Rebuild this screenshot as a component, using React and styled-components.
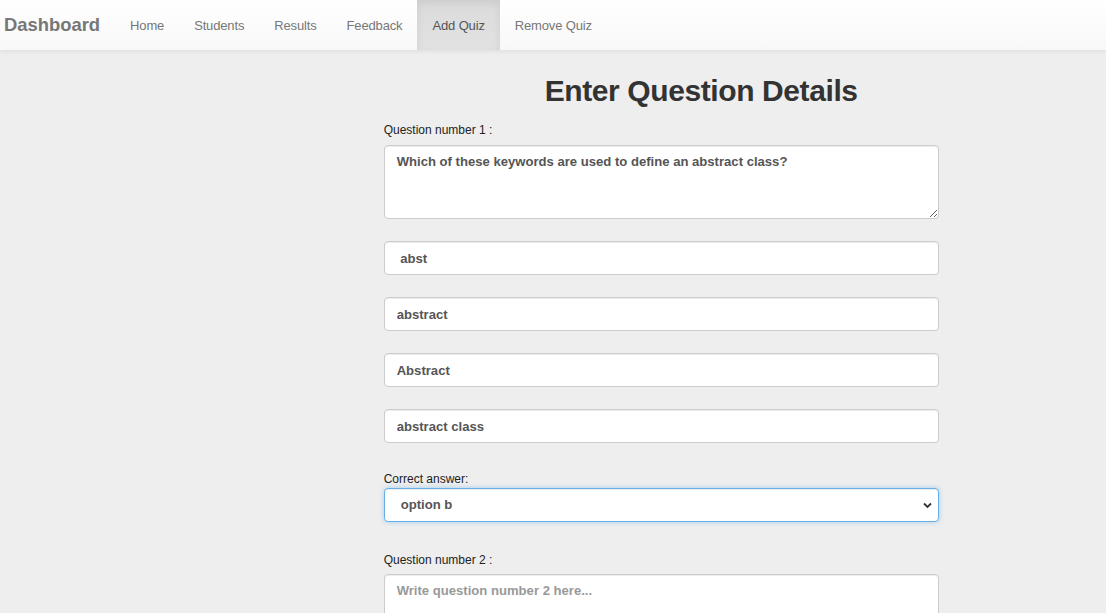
import React from "react";
import styled, { createGlobalStyle } from "styled-components";

const GlobalStyle = createGlobalStyle`
  html, body { margin: 0; padding: 0; }
  body {
    background: #eeeeee;
    font-family: "Liberation Sans", Arial, sans-serif;
    color: #333;
  }
  * { box-sizing: border-box; }
`;

const NavBar = styled.nav`
  height: 50px;
  display: flex;
  align-items: stretch;
  background: linear-gradient(to bottom, #ffffff 0%, #f8f8f8 100%);
  box-shadow: 0 1px 5px rgba(0, 0, 0, 0.08);
  position: relative;
  z-index: 1;
`;

const Brand = styled.a`
  display: flex;
  align-items: center;
  padding: 0 15px 0 4px;
  font-size: 18.4px;
  font-weight: 700;
  color: #777;
  text-decoration: none;
`;

const NavList = styled.ul`
  display: flex;
  list-style: none;
  margin: 0;
  padding: 0;
`;

const NavLink = styled.a`
  display: flex;
  align-items: center;
  height: 100%;
  padding: 0 15px;
  font-size: 13px;
  letter-spacing: -0.15px;
  color: ${(p) => (p.$active ? "#555" : "#777")};
  text-decoration: none;
  background: ${(p) =>
    p.$active ? "linear-gradient(to bottom, #dbdbdb 0%, #e2e2e2 100%)" : "transparent"};
  box-shadow: ${(p) => (p.$active ? "inset 0 3px 9px rgba(0,0,0,0.075)" : "none")};
`;

const Main = styled.main`
  padding-left: calc(33.3333% + 15px);
`;

const Form = styled.form`
  width: 555px;
  display: flex;
  flex-direction: column;
`;

const Title = styled.h1`
  margin: 24px 0 15px;
  padding-left: 80px;
  text-align: center;
  font-size: 30px;
  line-height: 33px;
  letter-spacing: -0.4px;
  font-weight: 700;
  color: #333;
`;

const Label = styled.label`
  display: block;
  font-size: 12px;
  line-height: 17px;
  color: #222;
  margin-top: ${(p) => p.$top || 0}px;
  margin-bottom: ${(p) => p.$bottom || 0}px;
`;

const fieldBase = `
  width: 100%;
  display: block;
  border: 1px solid #ccc;
  border-radius: 4px;
  background: #fff;
  font-family: "Liberation Sans", Arial, sans-serif;
  font-size: 13.1px;
  font-weight: 700;
  line-height: 20px;
  color: #555;
  padding: 6px 12px;
  box-shadow: inset 0 1px 1px rgba(0,0,0,0.075);
  outline: none;
  &::placeholder { color: #999; }
`;

const TextArea = styled.textarea`
  ${fieldBase}
  height: 74px;
  resize: vertical;
`;

const Input = styled.input`
  ${fieldBase}
  height: 34px;
  margin-top: 22px;
`;

const SelectWrap = styled.div`
  position: relative;
`;

const Select = styled.select`
  ${fieldBase}
  height: 34px;
  padding-left: 16px;
  appearance: none;
  -webkit-appearance: none;
  border-color: #66afe9;
  box-shadow: inset 0 1px 1px rgba(0,0,0,0.075), 0 0 5px rgba(102,175,233,0.55);
`;

const Chevron = styled.svg`
  position: absolute;
  right: 7px;
  top: 14px;
  width: 9px;
  height: 7px;
  pointer-events: none;
`;

const options = [" abst", "abstract", "Abstract", "abstract class"];

export default function App() {
  return (
    <>
      <GlobalStyle />
      <NavBar>
        <Brand href="#">Dashboard</Brand>
        <NavList>
          {["Home", "Students", "Results", "Feedback", "Add Quiz", "Remove Quiz"].map((t) => (
            <li key={t}>
              <NavLink href="#" $active={t === "Add Quiz"}>
                {t}
              </NavLink>
            </li>
          ))}
        </NavList>
      </NavBar>
      <Main>
        <Form onSubmit={(e) => e.preventDefault()}>
          <Title>Enter Question Details</Title>
          <Label $bottom={6}>Question number 1 :</Label>
          <TextArea defaultValue="Which of these keywords are used to define an abstract class?" />
          {options.map((o, i) => (
            <Input key={i} type="text" defaultValue={o} />
          ))}
          <Label $top={28}>Correct answer:</Label>
          <SelectWrap>
            <Select defaultValue="b">
              <option value="a">option a</option>
              <option value="b">option b</option>
              <option value="c">option c</option>
              <option value="d">option d</option>
            </Select>
            <Chevron viewBox="0 0 9 7">
              <path d="M1 1.5 L4.5 5 L8 1.5" fill="none" stroke="#333" strokeWidth="1.8" />
            </Chevron>
          </SelectWrap>
          <Label $top={30} $bottom={5}>Question number 2 :</Label>
          <TextArea placeholder="Write question number 2 here..." />
        </Form>
      </Main>
    </>
  );
}
